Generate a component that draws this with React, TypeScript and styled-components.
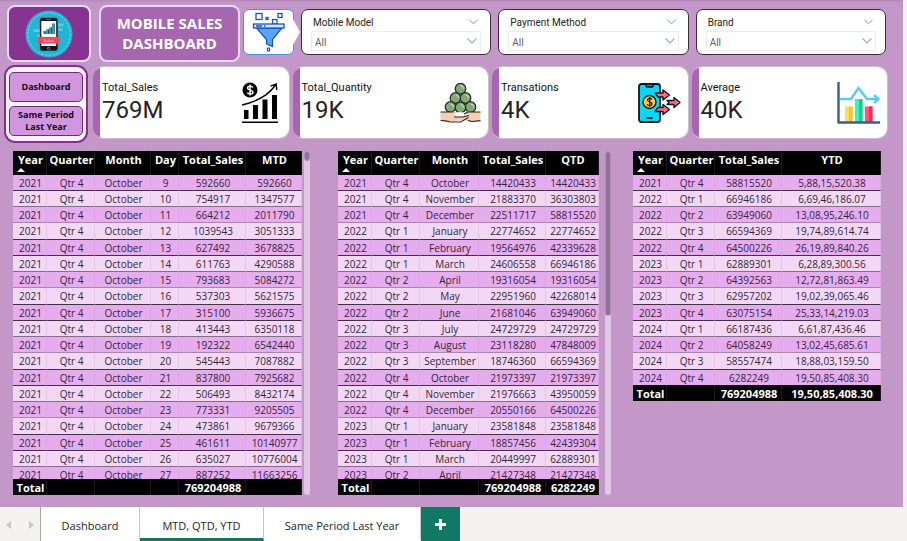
import React from "react";
import styled, { createGlobalStyle } from "styled-components";

const GlobalStyle = createGlobalStyle`
  * { box-sizing: border-box; }
  html, body, #root { height: 100%; }
  body { margin: 0; overflow: hidden; font-family: "Open Sans", "Noto Sans", sans-serif; color: #252423; }
  button, select { font: inherit; color: inherit; }
`;

const Page = styled.div`
  display: flex;
  flex-direction: column;
  height: 100vh;
  background: #f3f2f1;
`;

const Report = styled.main`
  flex: 1;
  min-height: 0;
  margin-right: 4px;
  display: flex;
  flex-direction: column;
  background: linear-gradient(#b489ba, #c398c8 3px);
`;

const HeaderRow = styled.header`
  display: flex;
  align-items: flex-start;
  padding: 5px 17px 0 7px;
`;

const LogoPanel = styled.div`
  width: 84px;
  height: 57px;
  border: 2px solid #e6d9f6;
  border-radius: 8px;
  background: #873391;
  display: flex;
  align-items: center;
  justify-content: center;
  margin-right: 8px;
`;

const Title = styled.h1`
  margin: 0 3px 0 0;
  padding-bottom: 2px;
  width: 141px;
  height: 57px;
  border: 2px solid #e6d9f6;
  border-radius: 8px;
  background: #a666b0;
  color: #fff;
  display: flex;
  align-items: center;
  justify-content: center;
  text-align: center;
  font-size: 15px;
  line-height: 20px;
  font-weight: 700;
`;

const FilterBadge = styled.div`
  position: relative;
  width: 51px;
  height: 46px;
  margin: 4px 7px 0 0;
  border: 1px solid #4a90d4;
  border-radius: 6px;
  background: #fff;
  display: flex;
  align-items: center;
  justify-content: center;
  &::after {
    content: "";
    position: absolute;
    right: -7px;
    top: 9px;
    border-left: 7px solid #fff;
    border-top: 13px solid transparent;
    border-bottom: 13px solid transparent;
  }
`;

const Slicers = styled.div`
  flex: 1;
  display: grid;
  grid-template-columns: repeat(3, 1fr);
  gap: 7px;
  margin-top: 4px;
`;

const SlicerBox = styled.section`
  height: 46px;
  border: 1px solid #3b2b3e;
  border-radius: 7px;
  background: #fff;
  padding: 3px 9px 0;
`;

const SlicerHead = styled.div`
  display: flex;
  justify-content: space-between;
  align-items: center;
  height: 18px;
  padding: 0 3px 0 2px;
  font-family: Roboto, sans-serif;
  font-size: 10px;
`;

const IconButton = styled.button`
  display: flex;
  align-items: center;
  justify-content: center;
  padding: 0;
  border: 0;
  background: none;
  cursor: pointer;
`;

const SelectWrap = styled.div`
  position: relative;
  height: 20px;
  svg { position: absolute; right: 4px; top: 7px; pointer-events: none; }
`;

const Select = styled.select`
  display: block;
  width: 100%;
  height: 20px;
  appearance: none;
  border: 1px solid #ececec;
  background: #fff;
  padding: 2px 3px 0;
  font-size: 10px;
  font-family: Roboto, sans-serif;
  color: #605e5c;
`;

const CardRow = styled.section`
  display: flex;
  padding: 3px 15px 0 4px;
  gap: 5px;
`;

const NavBox = styled.nav`
  width: 84px;
  height: 78px;
  border: 2px solid #85308f;
  border-radius: 11px;
  background: #fbf0fc;
  padding: 5px 3px;
  display: flex;
  flex-direction: column;
  gap: 4px;
`;

const NavButton = styled.button`
  flex: 1;
  border: 1px solid #6f2b7c;
  border-radius: 5px;
  background: #d296de;
  padding: 0;
  font-size: 9px;
  line-height: 12px;
  font-weight: 700;
  color: #120815;
`;

const Cards = styled.div`
  flex: 1;
  display: grid;
  grid-template-columns: repeat(4, 1fr);
  gap: 3px;
  padding-top: 1px;
`;

const Card = styled.article`
  height: 73px;
  border: 1px solid #c9bfc9;
  border-left: 0;
  border-radius: 11px;
  background: linear-gradient(90deg, #a666b0 7px, #fff 7px);
  display: flex;
  align-items: center;
  justify-content: space-between;
  padding: 0 7px 0 9px;
`;

const CardLabel = styled.div`
  font-family: Roboto, sans-serif;
  font-size: 11px;
  line-height: 15px;
  color: #111;
`;

const CardValue = styled.div`
  font-family: Roboto, sans-serif;
  font-size: 24px;
  line-height: 30px;
`;

const Tables = styled.section`
  flex: 1;
  min-height: 0;
  display: grid;
  grid-template-columns: 303fr 273fr 248fr;
  grid-template-rows: minmax(0, 1fr);
  column-gap: 22px;
  padding: 8px 22px 12px 13px;
`;

const TablePanel = styled.div<{ $gap: number; $end: number }>`
  display: flex;
  min-width: 0;
  gap: ${(p) => p.$gap}px;
  padding-right: ${(p) => p.$end}px;
`;

const Scroller = styled.div`
  flex: 1;
  min-width: 0;
  overflow: auto;
  scrollbar-width: none;
`;

const Track = styled.div`
  width: 6px;
  border-radius: 3px;
  background: #dfc7e3;
`;

const Thumb = styled.div<{ $size: number }>`
  height: ${(p) => p.$size}%;
  border: 1px solid #b18db7;
  border-radius: 3px;
  background: #8d7492;
`;

const Table = styled.table`
  width: 100%;
  table-layout: fixed;
  border-collapse: separate;
  border-spacing: 0;
  text-align: center;
  font-size: 10px;
  line-height: 13px;
  th, td { padding: 0 0 0 2px; white-space: nowrap; overflow: visible; }
  thead th {
    position: sticky;
    top: 0;
    height: 24px;
    padding-top: 2px;
    vertical-align: top;
    background: #000;
    color: #fff;
    font-size: 11px;
    line-height: 14px;
    font-weight: 700;
    border-right: 1px solid #1d171e;
  }
  tbody td {
    height: 16px;
    padding-top: 1px;
    border-right: 1px solid rgba(195, 152, 200, 0.3);
    border-bottom: 1px solid #3f3242;
    background: #f3d8f6;
    color: #33263a;
  }
  tbody tr:nth-child(odd) td { background: #e6adee; }
  tbody tr:nth-child(4n) td { height: 17px; }
  tbody tr:nth-child(4n + 2) td { border-bottom-color: #816f85; }
  tbody tr:nth-child(4n + 3) td { border-bottom-color: #ab84b2; }
  tbody tr:last-child td { height: 15px; border-bottom: 0; }
  tfoot td, tfoot th {
    position: sticky;
    bottom: 0;
    height: 16px;
    line-height: 15px;
    background: #000;
    color: #fff;
    font-size: 11px;
    font-weight: 700;
    border-right: 1px solid #1d171e;
  }
`;

const SortMark = styled.span`
  position: absolute;
  left: 4px;
  bottom: 3px;
  border: 4px solid transparent;
  border-top-width: 0;
  border-bottom-color: #fff;
`;

const TabBar = styled.footer`
  display: flex;
  height: 34px;
  background: #f3f2f1;
`;

const Pager = styled.div`
  width: 41px;
  display: flex;
  align-items: center;
  justify-content: space-between;
  padding: 2px 6px 0;
  border-right: 1px solid #a8a6a4;
`;

const Tab = styled.button<{ $width: number; $active?: boolean }>`
  min-width: ${(p) => p.$width}px;
  border: 0;
  border-right: 1px solid #c8c6c4;
  border-bottom: 3px solid ${(p) => (p.$active ? "#117865" : "#fff")};
  background: #fff;
  padding: 6px 10px 0;
  font-size: 11px;
  line-height: 16px;
  white-space: nowrap;
`;

const AddTab = styled.button`
  width: 39px;
  border: 0;
  padding: 0;
  background: #117865;
  display: flex;
  align-items: center;
  justify-content: center;
`;

const Chevron = ({ w = 9, color = "#7d93a0" }: { w?: number; color?: string }) => (
  <svg width={w} height="6" viewBox="0 0 10 6" fill="none" stroke={color} strokeWidth="1.1">
    <path d="M.5.5 5 5 9.5.5" />
  </svg>
);

const LogoIcon = () => (
  <svg width="48" height="48" viewBox="0 0 50 50">
    <circle cx="25" cy="25" r="24.500" fill="#22b4d2" />
    <circle cx="25" cy="25" r="22" fill="none" stroke="#8bdcea" strokeWidth=".8" strokeDasharray="3 1" />
    <path d="M34 14h6v3h-6zM35 19h4v3h-4zM9 20h7v3H9zM13 25h4v3h-4z" fill="#62cadd" />
    <rect x="15.500" y="8" width="18.500" height="34.500" rx="2.500" fill="#14161e" />
    <rect x="17" y="11.500" width="15.500" height="26" fill="#fff" />
    <path d="M22 9.800h5" stroke="#667" />
    <path d="M20 25v-3M23 25v-5M26 25v-7M29 25V14" stroke="#1d91a8" strokeWidth="1.700" />
    <path d="M21.500 25v-3M24.500 25v-5M27.500 25v-7M30.500 25V14" stroke="#203c4a" strokeWidth="1" />
    <rect x="13.500" y="28" width="22.500" height="7" fill="#e74b5e" />
    <text x="24.700" y="33" fontSize="4.500" fill="#fbd4d8" textAnchor="middle">Sales</text>
    <circle cx="24.700" cy="40" r="1.300" fill="none" stroke="#9aa" strokeWidth=".7" />
  </svg>
);

const FunnelIcon = () => (
  <svg width="34" height="40" viewBox="0 0 34 40" fill="none" stroke="#1557b8" strokeWidth="1.300">
    <rect x="4" y="1.500" width="6" height="6" />
    <rect x="14" y="5.500" width="2" height="2" />
    <rect x="26" y="1.500" width="4" height="4" />
    <rect x="20.500" y="7.500" width="4.500" height="4.500" />
    <path d="M4.500 16h25.500l-9.500 11.500v7l-6-2.700v-4.300z" fill="#5aa5fb" />
    <rect x="1.500" y="12" width="30.500" height="4" fill="#d3e7ff" />
    <path d="M4 14h6M12 14h1.500" />
    <ellipse cx="16.500" cy="37.500" rx="1.200" ry="1.600" />
  </svg>
);

const SalesIcon = () => (
  <svg width="41" height="42" viewBox="0 0 41 42">
    <circle cx="9" cy="8" r="7.500" fill="#000" />
    <path d="M12 5.500C11 3.700 6.500 3.700 6.500 6S12 8 12 10.300s-4.700 2.200-5.700.3M9 2.500v11" fill="none" stroke="#fff" strokeWidth="1.500" />
    <path d="M1 23C14 20 27 14 34.500 3M29.500 4.200 35.300 2l.4 6" fill="none" stroke="#000" strokeWidth="1.400" />
    <path d="M3 28h4.500v9H3zM12 23h5v14h-5zM21.500 17.500h5V37h-5zM31 13h5v24h-5zM1 39.500h36V41H1z" fill="#000" />
  </svg>
);

const balls: [number, number][] = [[20.500, 5.700], [15.500, 15], [25.500, 15], [10.500, 24], [30.500, 24], [20.500, 24.500]];
const QuantityIcon = () => (
  <svg width="41" height="40" viewBox="0 0 41 40" stroke="#1f2d20">
    {balls.map(([x, y]) => (
      <g key={`${x}-${y}`}>
        <circle cx={x} cy={y} r="5.300" fill="#86a878" strokeWidth="1.200" />
        <path d={`M${x} ${y - 3}a3 3 0 0 1 3 3`} fill="none" stroke="#d5e5ce" />
      </g>
    ))}
    <path d="M.5 29h8l6-.5 5 1.500 8 3-5 4-10 1.500-12-1z" fill="#f9cdb4" stroke="none" />
    <path d="M40.500 29h-8l-5-.5-5 2-7 3.500 7 1 3 3 7 1 8-1z" fill="#f9cdb4" stroke="none" />
    <path d="M14 30.500 20 29l7.500 1-6 4h-5z" fill="#fff" stroke="none" />
    <path d="M.5 29h13M27.500 29h13M.5 37.500l5 .3 5 1.200h10l8-4.500M28 37.500l4 1 8.500-.8M14 34h9l6-1.500M24 31l4-2" fill="none" strokeWidth="1.200" />
  </svg>
);

const TransferIcon = () => (
  <svg width="43" height="40" viewBox="0 0 43 40" stroke="#0b1720" strokeWidth="1.400" strokeLinejoin="round">
    <rect x="1" y="1" width="21" height="38" rx="2.500" fill="#08d7f5" strokeWidth="1.800" />
    <path d="M7 1h9l-1.500 3h-6z" fill="#507580" />
    <path d="M8.500 35h6" strokeWidth="1.800" />
    <circle cx="11.500" cy="19" r="6.500" fill="#ffc64a" />
    <path d="M14 16.500c-1-1.500-4.500-1.500-4.500.6s4.500 1.700 4.500 3.800-4 2-5 .3M11.700 14v10" fill="none" strokeWidth="1.200" />
    <path d="M17 10h8V7l6.500 5-6.500 5v-3h-5z" fill="#ff6d83" />
    <path d="M29 17.500h7v-3l6 5-6 5v-3h-7l2-2z" fill="#ff6d83" />
    <path d="M20 24.500h5v-3l6.500 5-6.500 5v-3h-8z" fill="#ff6d83" />
  </svg>
);

const AverageIcon = () => (
  <svg width="43" height="43" viewBox="0 0 43 43" fill="none">
    <path d="M8 25.500h7.500V41H8z" fill="#ffdf55" />
    <path d="M18 18h7.500v23H18z" fill="#35f5ba" />
    <path d="M28 25.500h7.500V41H28z" fill="#ff5968" />
    <path d="M12 25.500h3.500V41H12z" fill="#ffc033" />
    <path d="M22 18h3.500v23H22z" fill="#25c98f" />
    <path d="M32 25.500h3.500V41H32z" fill="#e72e68" />
    <path d="M1.500 1v40.500H43" stroke="#3e5d83" strokeWidth="2.400" />
    <path d="M3 18h11l7.500-11L30 18h10M37 14l4.500 4-4.500 4" stroke="#55cafb" strokeWidth="2.400" />
  </svg>
);

const slicers = ["Mobile Model", "Payment Method", "Brand"];

const cards = [
  { label: "Total_Sales", value: "769M", icon: <SalesIcon /> },
  { label: "Total_Quantity", value: "19K", icon: <QuantityIcon /> },
  { label: "Transations", value: "4K", icon: <TransferIcon /> },
  { label: "Average", value: "40K", icon: <AverageIcon /> },
];

const mtdRows = [
  ["9", "592660", "592660"], ["10", "754917", "1347577"], ["11", "664212", "2011790"],
  ["12", "1039543", "3051333"], ["13", "627492", "3678825"], ["14", "611763", "4290588"],
  ["15", "793683", "5084272"], ["16", "537303", "5621575"], ["17", "315100", "5936675"],
  ["18", "413443", "6350118"], ["19", "192322", "6542440"], ["20", "545443", "7087882"],
  ["21", "837800", "7925682"], ["22", "506493", "8432174"], ["23", "773331", "9205505"],
  ["24", "473861", "9679366"], ["25", "461611", "10140977"], ["26", "635027", "10776004"],
  ["27", "887252", "11663256"],
].map((r) => ["2021", "Qtr 4", "October", ...r]);

const qtdRows = [
  ["2021", "Qtr 4", "October", "14420433", "14420433"],
  ["2021", "Qtr 4", "November", "21883370", "36303803"],
  ["2021", "Qtr 4", "December", "22511717", "58815520"],
  ["2022", "Qtr 1", "January", "22774652", "22774652"],
  ["2022", "Qtr 1", "February", "19564976", "42339628"],
  ["2022", "Qtr 1", "March", "24606558", "66946186"],
  ["2022", "Qtr 2", "April", "19316054", "19316054"],
  ["2022", "Qtr 2", "May", "22951960", "42268014"],
  ["2022", "Qtr 2", "June", "21681046", "63949060"],
  ["2022", "Qtr 3", "July", "24729729", "24729729"],
  ["2022", "Qtr 3", "August", "23118280", "47848009"],
  ["2022", "Qtr 3", "September", "18746360", "66594369"],
  ["2022", "Qtr 4", "October", "21973397", "21973397"],
  ["2022", "Qtr 4", "November", "21976663", "43950059"],
  ["2022", "Qtr 4", "December", "20550166", "64500226"],
  ["2023", "Qtr 1", "January", "23581848", "23581848"],
  ["2023", "Qtr 1", "February", "18857456", "42439304"],
  ["2023", "Qtr 1", "March", "20449997", "62889301"],
  ["2023", "Qtr 2", "April", "21427348", "21427348"],
];

const ytdRows = [
  ["2021", "Qtr 4", "58815520", "5,88,15,520.38"],
  ["2022", "Qtr 1", "66946186", "6,69,46,186.07"],
  ["2022", "Qtr 2", "63949060", "13,08,95,246.10"],
  ["2022", "Qtr 3", "66594369", "19,74,89,614.74"],
  ["2022", "Qtr 4", "64500226", "26,19,89,840.26"],
  ["2023", "Qtr 1", "62889301", "6,28,89,300.56"],
  ["2023", "Qtr 2", "64392563", "12,72,81,863.49"],
  ["2023", "Qtr 3", "62957202", "19,02,39,065.46"],
  ["2023", "Qtr 4", "63075154", "25,33,14,219.03"],
  ["2024", "Qtr 1", "66187436", "6,61,87,436.46"],
  ["2024", "Qtr 2", "64058249", "13,02,45,685.61"],
  ["2024", "Qtr 3", "58557474", "18,88,03,159.50"],
  ["2024", "Qtr 4", "6282249", "19,50,85,408.30"],
];

type MatrixProps = {
  heads: string[];
  widths: number[];
  rows: string[][];
  totals: string[];
  thumb?: number;
  gap?: number;
  end?: number;
};

const Matrix = ({ heads, widths, rows, totals, thumb, gap = 0, end = 0 }: MatrixProps) => (
  <TablePanel $gap={gap} $end={end}>
    <Scroller>
      <Table>
        <colgroup>
          {widths.map((w, i) => <col key={i} width={w} />)}
        </colgroup>
        <thead>
          <tr>
            {heads.map((h, i) => (
              <th key={h} scope="col" aria-sort={i === 0 ? "ascending" : undefined}>
                {h}
                {i === 0 && <SortMark />}
              </th>
            ))}
          </tr>
        </thead>
        <tbody>
          {rows.map((r, i) => (
            <tr key={i}>{r.map((c, j) => <td key={j}>{c}</td>)}</tr>
          ))}
        </tbody>
        <tfoot>
          <tr>
            <th scope="row">Total</th>
            {totals.map((t, i) => <td key={i}>{t}</td>)}
          </tr>
        </tfoot>
      </Table>
    </Scroller>
    {thumb !== undefined && <Track><Thumb $size={thumb} /></Track>}
  </TablePanel>
);

export default function App() {
  return (
    <Page>
      <GlobalStyle />
      <Report>
        <HeaderRow>
          <LogoPanel><LogoIcon /></LogoPanel>
          <Title>MOBILE SALES<br />DASHBOARD</Title>
          <FilterBadge><FunnelIcon /></FilterBadge>
          <Slicers>
            {slicers.map((name) => {
              const id = name.toLowerCase().replace(" ", "-");
              return (
                <SlicerBox key={name}>
                  <SlicerHead>
                    <label htmlFor={id}>{name}</label>
                    <IconButton aria-label={`Collapse ${name}`}><Chevron w={9} /></IconButton>
                  </SlicerHead>
                  <SelectWrap>
                    <Select id={id} defaultValue="All"><option>All</option></Select>
                    <Chevron w={10} color="#8fb0c0" />
                  </SelectWrap>
                </SlicerBox>
              );
            })}
          </Slicers>
        </HeaderRow>
        <CardRow>
          <NavBox>
            <NavButton>Dashboard</NavButton>
            <NavButton>Same Period<br />Last Year</NavButton>
          </NavBox>
          <Cards>
            {cards.map((c) => (
              <Card key={c.label}>
                <div>
                  <CardLabel>{c.label}</CardLabel>
                  <CardValue>{c.value}</CardValue>
                </div>
                {c.icon}
              </Card>
            ))}
          </Cards>
        </CardRow>
        <Tables>
          <Matrix
            heads={["Year", "Quarter", "Month", "Day", "Total_Sales", "MTD"]}
            widths={[34, 48, 56, 28, 67, 56]}
            rows={mtdRows}
            totals={["", "", "", "769204988", ""]}
            thumb={3}
            gap={2}
            end={6}
          />
          <Matrix
            heads={["Year", "Quarter", "Month", "Total_Sales", "QTD"]}
            widths={[34, 48, 59, 67, 53]}
            rows={qtdRows}
            totals={["", "", "769204988", "6282249"]}
            thumb={48}
            gap={6}
          />
          <Matrix
            heads={["Year", "Quarter", "Total_Sales", "YTD"]}
            widths={[34, 48, 67, 99]}
            rows={ytdRows}
            totals={["", "769204988", "19,50,85,408.30"]}
          />
        </Tables>
      </Report>
      <TabBar>
        <Pager>
          <IconButton aria-label="Previous pages">
            <svg width="5" height="8" viewBox="0 0 5 8"><path d="M5 0v8L0 4z" fill="#c8c6c4" /></svg>
          </IconButton>
          <IconButton aria-label="Next pages">
            <svg width="5" height="8" viewBox="0 0 5 8"><path d="M0 0v8l5-4z" fill="#c8c6c4" /></svg>
          </IconButton>
        </Pager>
        <Tab $width={99}>Dashboard</Tab>
        <Tab $width={124} $active>MTD, QTD, YTD</Tab>
        <Tab $width={157}>Same Period Last Year</Tab>
        <AddTab aria-label="New page">
          <svg width="11" height="11" viewBox="0 0 11 11"><path d="M5.500 0v11M0 5.500h11" stroke="#fff" strokeWidth="3" /></svg>
        </AddTab>
      </TabBar>
    </Page>
  );
}
